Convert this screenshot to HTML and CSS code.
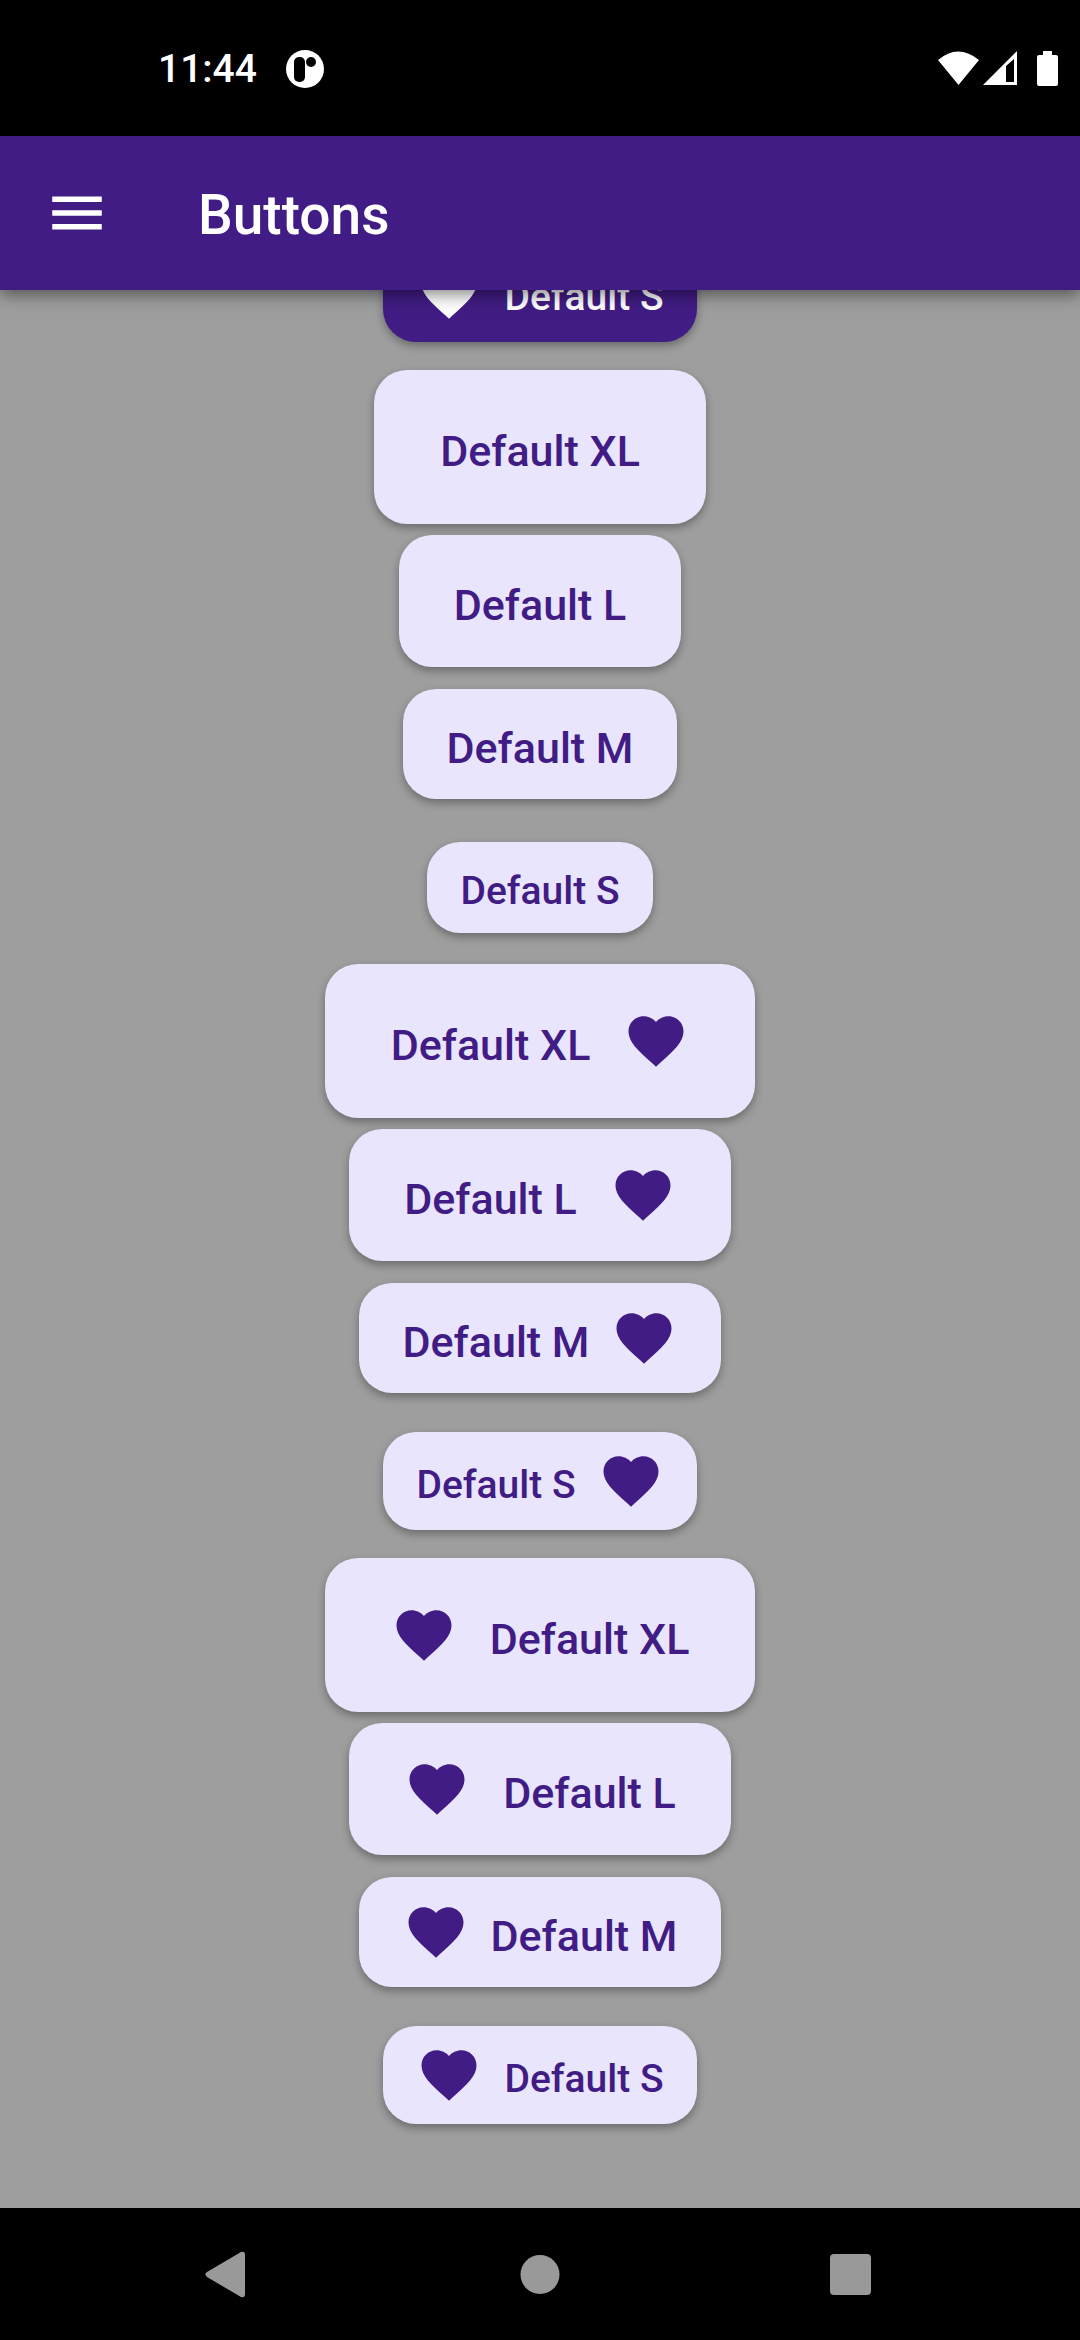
FILE: index.html
```
<!DOCTYPE html>
<html lang="en">
<head>
<meta charset="utf-8">
<meta name="viewport" content="width=device-width, initial-scale=1">
<title>Buttons</title>
<link rel="stylesheet" href="styles.css">
</head>
<body>
<svg class="defs" aria-hidden="true">
  <symbol id="heart" viewBox="0 0 24 24"><path d="M12 21.35l-1.45-1.32C5.4 15.36 2 12.28 2 8.5 2 5.42 4.42 3 7.5 3c1.74 0 3.41.81 4.5 2.09C13.09 3.81 14.76 3 16.5 3 19.58 3 22 5.42 22 8.5c0 3.78-3.4 6.86-8.55 11.54L12 21.35z"/></symbol>
</svg>

<div class="status">
  <span class="time">11:44</span>
  <svg class="notice" viewBox="0 0 38 38" aria-hidden="true"><circle cx="19" cy="19" r="19" fill="#fff"/><rect x="8" y="7" width="11" height="25" rx="5"/><circle cx="25" cy="12" r="5"/></svg>
  <svg class="signals" viewBox="0 0 120 38" aria-hidden="true" fill="#fff">
    <path d="M0 10Q20 -7 41 10L20.500 35z"/>
    <path fill-rule="evenodd" d="M79 1V35H45zM76 9L68 16V32H76z"/>
    <path d="M105 1h9v4h4q2 0 2 2v27q0 2-2 2h-17q-2 0-2-2V7q0-2 2-2h4z"/>
  </svg>
</div>

<header class="appbar">
  <button class="menu" aria-label="Open menu"><svg viewBox="0 0 24 24"><path d="M3 18h18v-2H3v2zm0-5h18v-2H3v2zm0-7v2h18V6H3z"/></svg></button>
  <h1>Buttons</h1>
</header>

<main class="list">
  <div class="slot"><button class="btn s primary"><svg class="heart"><use href="#heart"/></svg><span>Default S</span></button></div>

  <div class="slot"><button class="btn xl"><span>Default XL</span></button></div>
  <div class="slot"><button class="btn l"><span>Default L</span></button></div>
  <div class="slot"><button class="btn m"><span>Default M</span></button></div>
  <div class="slot"><button class="btn s"><span>Default S</span></button></div>

  <div class="slot"><button class="btn xl"><span>Default XL</span><svg class="heart"><use href="#heart"/></svg></button></div>
  <div class="slot"><button class="btn l"><span>Default L</span><svg class="heart"><use href="#heart"/></svg></button></div>
  <div class="slot"><button class="btn m"><span>Default M</span><svg class="heart"><use href="#heart"/></svg></button></div>
  <div class="slot"><button class="btn s"><span>Default S</span><svg class="heart"><use href="#heart"/></svg></button></div>

  <div class="slot"><button class="btn xl"><svg class="heart"><use href="#heart"/></svg><span>Default XL</span></button></div>
  <div class="slot"><button class="btn l"><svg class="heart"><use href="#heart"/></svg><span>Default L</span></button></div>
  <div class="slot"><button class="btn m"><svg class="heart"><use href="#heart"/></svg><span>Default M</span></button></div>
  <div class="slot"><button class="btn s"><svg class="heart"><use href="#heart"/></svg><span>Default S</span></button></div>
</main>

<nav class="sysnav" aria-label="System">
  <button aria-label="Back"><svg viewBox="0 0 66 66"><path d="M12 31L46 11Q50 10 50 14V53Q50 57 46 56L12 36Q9 33 12 31z"/></svg></button>
  <button aria-label="Home"><svg viewBox="0 0 66 66"><circle cx="33" cy="33.500" r="19.500"/></svg></button>
  <button aria-label="Recent apps"><svg viewBox="0 0 66 66"><rect x="11" y="13" width="41" height="41" rx="4"/></svg></button>
</nav>
</body>
</html>
```
FILE: styles.css
```
* {
  box-sizing: border-box;
}

body {
  margin: 0;
  height: 100vh;
  display: flex;
  flex-direction: column;
  background: #9e9e9e;
  font-family: Roboto, "Noto Sans", sans-serif;
  font-weight: 500;
}

button {
  border: 0;
  padding: 0;
  background: none;
  font: inherit;
  color: inherit;
}

svg {
  display: block;
}

.defs {
  display: none;
}

/* System status bar */
.status {
  flex: none;
  height: 136px;
  padding: 2px 22px 0 158px;
  display: flex;
  align-items: center;
  background: #000;
  color: #fff;
  font-size: 39px;
}

.notice {
  width: 38px;
  height: 38px;
  margin-left: 29px;
}

.signals {
  width: 120px;
  height: 38px;
  margin-left: auto;
}

/* App bar */
.appbar {
  flex: none;
  height: 154px;
  padding: 0 44px;
  display: flex;
  align-items: center;
  gap: 88px;
  background: #411c84;
  color: #fff;
  box-shadow: 0 4px 16px rgba(0, 0, 0, 0.5);
  z-index: 1;
}

.appbar h1 {
  margin: 0;
  padding-top: 4px;
  font-size: 55px;
  font-weight: 500;
}

.menu svg {
  width: 66px;
  height: 66px;
  fill: currentColor;
}

/* Scrolled list of sample buttons */
.list {
  flex: 1;
  min-height: 0;
  padding-bottom: 67px;
  display: flex;
  flex-direction: column;
  justify-content: flex-end;
  align-items: center;
  gap: 11px;
  overflow: hidden;
}

.slot {
  flex: none;
  min-height: 132px;
  display: flex;
  align-items: center;
}

.btn {
  display: flex;
  align-items: center;
  justify-content: center;
  border-radius: 33px;
  background: #e9e5fd;
  color: #411c84;
  box-shadow: 0 4px 8px rgba(0, 0, 0, 0.32);
  font-size: 43px;
  line-height: 52px;
}

.btn span {
  padding-top: 8px;
}

.btn.primary {
  background: #411c84;
  color: #fff;
}

.heart {
  width: 66px;
  height: 66px;
  fill: currentColor;
}

.xl {
  min-height: 154px;
  padding: 0 66px;
  gap: 33px;
}

.l {
  min-height: 132px;
  padding: 0 55px;
  gap: 33px;
}

.m {
  min-height: 110px;
  padding: 0 44px;
  gap: 22px;
}

.s {
  min-height: 91px;
  padding: 16px 33px;
  gap: 22px;
  font-size: 39px;
  line-height: 48px;
}

/* System navigation */
.sysnav {
  flex: none;
  height: 132px;
  padding: 0 72px;
  display: flex;
  align-items: center;
  justify-content: space-around;
  background: #000;
}

.sysnav svg {
  width: 66px;
  height: 66px;
  fill: #999;
}
```
